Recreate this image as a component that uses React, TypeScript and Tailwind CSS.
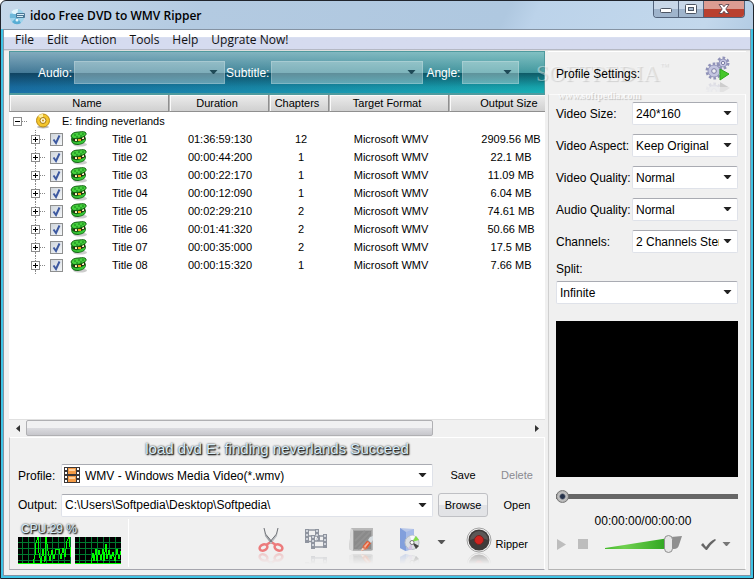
import type React from "react"
import clsx from "clsx"

interface Title {
  name: string
  duration: string
  chapters: number
  size: string
}

const menus = ["File", "Edit", "Action", "Tools", "Help", "Upgrate Now!"]

const titles: Title[] = [
  { name: "Title 01", duration: "01:36:59:130", chapters: 12, size: "2909.56 MB" },
  { name: "Title 02", duration: "00:00:44:200", chapters: 1, size: "22.1 MB" },
  { name: "Title 03", duration: "00:00:22:170", chapters: 1, size: "11.09 MB" },
  { name: "Title 04", duration: "00:00:12:090", chapters: 1, size: "6.04 MB" },
  { name: "Title 05", duration: "00:02:29:210", chapters: 2, size: "74.61 MB" },
  { name: "Title 06", duration: "00:01:41:320", chapters: 2, size: "50.66 MB" },
  { name: "Title 07", duration: "00:00:35:000", chapters: 2, size: "17.5 MB" },
  { name: "Title 08", duration: "00:00:15:320", chapters: 1, size: "7.66 MB" },
]

const columns = ["Name", "Duration", "Chapters", "Target Format", "Output Size"]

const settings = [
  { id: "video-size", label: "Video Size:", value: "240*160" },
  { id: "video-aspect", label: "Video Aspect:", value: "Keep Original" },
  { id: "video-quality", label: "Video Quality:", value: "Normal" },
  { id: "audio-quality", label: "Audio Quality:", value: "Normal" },
  { id: "channels", label: "Channels:", value: "2 Channels Stereo" },
]

function Caret({ className }: { className?: string }) {
  return (
    <svg className={className} width="9" height="5" viewBox="0 0 9 5" fill="currentColor" aria-hidden="true">
      <path d="M0.500 0h8L5 4H4z" />
    </svg>
  )
}

interface ComboProps {
  id: string
  value: string
  className?: string
  icon?: React.ReactNode
}

function Combo({ id, value, className, icon }: ComboProps) {
  return (
    <div className={clsx("relative min-w-0", className)}>
      <select
        id={id}
        className={clsx(
          "block h-[23px] w-full appearance-none overflow-hidden rounded-[2px] border border-[#dfe2e9] border-t-[#a9abb2] bg-white pr-[18px] text-xs",
          icon ? "pl-[23px]" : "pl-[3px]",
        )}
      >
        <option>{value}</option>
      </select>
      {icon && <span className="pointer-events-none absolute left-[3px] top-[3px]">{icon}</span>}
      <Caret className="pointer-events-none absolute right-[6px] top-[9px] text-[#222]" />
    </div>
  )
}

function GlassCombo({ id, label, className }: { id: string; label: string; className: string }) {
  return (
    <>
      <label htmlFor={id} className="text-xs text-white">
        {label}
      </label>
      <div className={clsx("relative ml-0.5", className)}>
        <select id={id} className="block h-[23px] w-full appearance-none border border-white/20 bg-[#d8eaec]/40" />
        <Caret className="pointer-events-none absolute right-[7px] top-[9px] text-[#1f4a57]" />
      </div>
    </>
  )
}

// Toolbar glyph with a fading mirror image below it
function ReflectedIcon({ name, children }: { name: string; children: React.ReactNode }) {
  return (
    <svg width="26" height="38" viewBox="0 0 26 38" aria-hidden="true">
      <defs>
        <linearGradient id={`${name}-fade`} x1="0" y1="26" x2="0" y2="37" gradientUnits="userSpaceOnUse">
          <stop offset="0" stopColor="#fff" stopOpacity="0.35" />
          <stop offset="1" stopColor="#fff" stopOpacity="0" />
        </linearGradient>
        <mask id={`${name}-mask`} maskUnits="userSpaceOnUse" x="0" y="25" width="26" height="13">
          <rect y="25" width="26" height="13" fill={`url(#${name}-fade)`} />
        </mask>
      </defs>
      <g>{children}</g>
      <g mask={`url(#${name}-mask)`}>
        <g transform="translate(0 51) scale(1 -1)">{children}</g>
      </g>
    </svg>
  )
}

function Scissors() {
  return (
    <ReflectedIcon name="cut">
      <path d="M6 1l1 6 8 9-2 1-6-8z" fill="#a3a6ab" />
      <path d="M20 1l-1 6-8 9 2 1 6-8z" fill="#b9bcc0" />
      <path d="M6 1l1.500 6L15 16M20 1l-1.500 6L11 16" stroke="#6b6e73" fill="none" />
      <g fill="none" stroke="#ec7b7c" strokeWidth="2.500">
        <ellipse cx="5.500" cy="20.500" rx="4" ry="3" transform="rotate(-25 5.500 20.500)" />
        <ellipse cx="20.500" cy="20.500" rx="4" ry="3" transform="rotate(25 20.500 20.500)" />
        <path d="M8 18l4-2.500M18 18l-4-2.500" />
      </g>
    </ReflectedIcon>
  )
}

function Merge() {
  return (
    <ReflectedIcon name="merge">
      <g fill="none" stroke="#8f949f" strokeWidth="4">
        <path d="M4 2v14M14 2v6" />
        <path d="M3 3h12M3 9h6M4 14.500h5" strokeWidth="1.500" />
        <path d="M10 8v14M22 7v14" />
        <path d="M10 9h13M10 14h12M10 20h13" strokeWidth="1.500" />
        <path d="M15.500 8v6" strokeWidth="3" />
      </g>
      <g fill="none" stroke="#cfd3da" strokeWidth="2" strokeDasharray="2 2">
        <path d="M4 3v12M14 3v10M10 9v12M22 8v12" />
      </g>
    </ReflectedIcon>
  )
}

function EditClip() {
  return (
    <ReflectedIcon name="edit">
      <path d="M3 1h22v22l-2 1H5l-4-2z" fill="#b9b9b9" />
      <path d="M3 1L1 22l4 2V3z" fill="#d9d9d9" />
      <rect x="5.500" y="3.500" width="18" height="19" fill="#8a8a8a" stroke="#a6a6a6" />
      <path d="M7 20L22 5M7 14L17 4M10 22L23 9" stroke="#929292" strokeWidth="2" />
      <path d="M13 24l2-5 4-5 4 2-4 6z" fill="#df7350" />
      <path d="M15 19l4-5 4 2-4 5z" fill="#e15a33" />
      <path d="M16 19l4-4 1 1-4 5z" fill="#f4b29a" />
      <path d="M20 13l2-3 3-1v4l-2 3z" fill="#d6dce0" />
      <path d="M13 24l1-3 3 1z" fill="#f2ddd0" />
    </ReflectedIcon>
  )
}

function DiscFolder() {
  return (
    <ReflectedIcon name="disc">
      <path d="M4 1l14 1v20l-9 2-5-3z" fill="#b9c8e8" />
      <path d="M4 1l6 4v19l-6-3z" fill="#829fdc" />
      <path d="M10 5l8-3v19l-8 3z" fill="#a6bbe8" />
      <circle cx="16" cy="15.500" r="7" fill="#dcdfe3" stroke="#b8bec7" />
      <path d="M16 15L14 9a7 7 0 0 1 5 0z" fill="#f9fafb" />
      <path d="M16 15l4-6 3 4z" fill="#83df48" />
      <path d="M16 15l-4 7 4 1z" fill="#d3c3e2" />
      <path d="M16 15l7 4-3 3z" fill="#444" />
      <circle cx="16" cy="15.500" r="2" fill="#fff" stroke="#777" />
    </ReflectedIcon>
  )
}

function Record() {
  return (
    <ReflectedIcon name="record">
      <circle cx="13" cy="13" r="12" fill="#f2f2f2" stroke="#a4a4a4" />
      <circle cx="13" cy="13" r="10.500" fill="#3f3b3a" />
      <path d="M4 13a9 9 0 0 1 18 0q-9-4-18 0z" fill="#5c5857" />
      <circle cx="13" cy="13" r="4.500" fill="#d02420" stroke="#7a2421" />
    </ReflectedIcon>
  )
}

function Gear({ x, y, r }: { x: number; y: number; r: number }) {
  return (
    <g transform={`translate(${x} ${y})`}>
      <circle r={r} fill="none" stroke="#9092b8" strokeWidth="3" strokeDasharray="2.500 2" />
      <circle r={r - 1} fill="#c3c5e0" stroke="#9496bc" />
      <circle r={r / 3} fill="#f0f0f4" stroke="#7e7fa6" />
    </g>
  )
}

function Gears() {
  return (
    <svg width="26" height="36" viewBox="0 0 26 36" aria-hidden="true">
      <g opacity="0.18" transform="translate(0 50) scale(1 -1)">
        <Gear x={9} y={15} r={7} />
        <path d="M15 12l10 6-10 6z" fill="#333" />
      </g>
      <rect y="31" width="26" height="5" fill="#f0f0f0" opacity="0.6" />
      <Gear x={18} y={7} r={5} />
      <Gear x={9} y={15} r={7} />
      <path d="M15 13l9 5-9 6z" fill="#45c72a" stroke="#2fa61d" />
    </svg>
  )
}

function AppIcon() {
  return (
    <svg width="17" height="17" viewBox="0 0 17 17" aria-hidden="true">
      <circle cx="8" cy="8.500" r="7.500" fill="#9ed3ea" />
      <path d="M8 8.500L2 4a7.500 7.500 0 0 1 7-3z" fill="#e4f5fb" />
      <path d="M8 9l-5 5a7.500 7.500 0 0 0 9 1z" fill="#57add4" />
      <path d="M1 6h6v4H1z" fill="#6fb9da" />
      <rect x="7" y="5" width="9" height="5" rx="1" fill="#4a7896" />
      <path d="M8 6.500h7M8 8.500h6" stroke="#d9edf6" />
      <circle cx="8" cy="12" r="1.500" fill="#e8f7fc" />
    </svg>
  )
}

function DiscIcon() {
  return (
    <svg width="16" height="16" viewBox="0 0 16 16" aria-hidden="true">
      <ellipse cx="8" cy="14" rx="6" ry="1.500" fill="#bbb" />
      <circle cx="8" cy="7.500" r="6.500" fill="#f4c62c" stroke="#b98a14" />
      <path d="M8 7L3 3a6.500 6.500 0 0 1 5-2z" fill="#fff0a0" />
      <circle cx="8" cy="7.500" r="3" fill="#fff7d6" stroke="#a87810" />
      <circle cx="8" cy="7.500" r="1" fill="#c58c14" />
    </svg>
  )
}

function TitleIcon() {
  return (
    <svg width="18" height="16" viewBox="0 0 18 16" aria-hidden="true">
      <ellipse cx="10" cy="13.500" rx="7" ry="2" fill="#ccc" />
      <path d="M1 8q0 6 7 6 8-1 8-6l-1-3H2z" fill="#116b13" />
      <path d="M2 10q6 3 13-2v2q-2 3-7 3-5 0-6-3z" fill="#38c536" />
      <path d="M3 8l12-3v3q-5 3-11 2z" fill="#2b2a10" />
      <path d="M5 8h2v2H5zM12 6h2v2h-2z" fill="#fff6c5" />
      <path d="M8 8h3v2H8z" fill="#f0ae1e" />
      <path d="M1 5q1-4 8-4 6-1 7 1 1 3-6 5-8 2-9-2z" fill="#45cf3c" stroke="#10600f" />
      <path d="M4 4h2M8 3h2M12 3h2M6 6h2M10 5h2" stroke="#128016" />
    </svg>
  )
}

function FilmIcon() {
  return (
    <svg className="block" width="16" height="16" viewBox="0 0 16 16" aria-hidden="true">
      <rect width="16" height="16" fill="#3c3636" />
      <path d="M2 1v15M14 1v15" stroke="#fff" strokeWidth="2" strokeDasharray="2 2" />
      <rect x="4" y="1" width="8" height="6" fill="#f49a45" />
      <rect x="4" y="9" width="8" height="6" fill="#f49a45" />
      <path d="M5 3h6M5 11h6" stroke="#ffd09a" strokeWidth="2" />
    </svg>
  )
}

function CpuGraph({ width, points }: { width: number; points: string }) {
  const lines: number[] = []
  for (let x = 4; x < width; x += 6) lines.push(x)
  return (
    <svg width={width} height="27" viewBox={`0 0 ${width} 27`} shapeRendering="crispEdges" aria-hidden="true">
      <rect width={width} height="27" fill="#000" />
      {lines.map((x) => (
        <path key={x} d={`M${x}.5 0v27`} stroke="#007a2e" />
      ))}
      {[5, 11, 17, 23].map((y) => (
        <path key={y} d={`M0 ${y}.5h${width}`} stroke="#007a2e" />
      ))}
      <polyline points={points} fill="none" stroke="#00ff00" />
      <path d={`M0 26.500h${width}`} stroke="#00ff00" />
    </svg>
  )
}

function ExpandBox({ label, open }: { label: string; open?: boolean }) {
  return (
    <button type="button" aria-label={label} className="block size-[9px] shrink-0 bg-white">
      <svg className="block" width="9" height="9" viewBox="0 0 9 9" shapeRendering="crispEdges">
        <rect x="0.500" y="0.500" width="8" height="8" fill="#fff" stroke="#8c8c8c" />
        <path d={open ? "M2 4.500h5" : "M2 4.500h5M4.500 2v5"} stroke="#000" />
      </svg>
    </button>
  )
}

function TitleBar() {
  return (
    <header className="flex h-7 items-start">
      <div className="flex h-full flex-1 items-center gap-1 pt-0.5 pl-2">
        <AppIcon />
        <h1 className="font-['Open_Sans','Noto_Sans',sans-serif] text-xs font-semibold text-black">
          idoo Free DVD to WMV Ripper
        </h1>
      </div>
      <div className="mr-2 flex h-[17px] overflow-hidden rounded-b border border-t-0 border-[#52627a]">
        <button
          type="button"
          aria-label="Minimize"
          className="flex w-[25px] items-center justify-center border-r border-[#52627a] bg-linear-to-b from-[#c8d7e8] from-50% to-[#9fb4cc] to-50%"
        >
          <svg width="12" height="10" viewBox="0 0 12 10">
            <rect x="0.500" y="4.500" width="11" height="4" rx="1" fill="#fff" stroke="#4d5563" />
          </svg>
        </button>
        <button
          type="button"
          aria-label="Maximize"
          className="flex w-[25px] items-center justify-center border-r border-[#52627a] bg-linear-to-b from-[#c8d7e8] from-50% to-[#9fb4cc] to-50%"
        >
          <svg width="12" height="10" viewBox="0 0 12 10">
            <rect x="0.500" y="0.500" width="11" height="9" rx="1" fill="#fff" stroke="#4d5563" />
            <rect x="3.500" y="3.500" width="5" height="3" fill="#aabdd2" stroke="#4d5563" />
          </svg>
        </button>
        <button
          type="button"
          aria-label="Close"
          className="flex w-[40px] items-center justify-center bg-linear-to-b from-[#dc9c92] from-50% to-[#b9402f] to-50%"
        >
          <svg width="12" height="10" viewBox="0 0 13 11">
            <path
              d="M1 0.500h3.500l2 2.500 2-2.500H12L8.500 5.500l3.500 5H8.500l-2-2.500-2 2.500H1l3.500-5z"
              fill="#fff"
              stroke="#5c4650"
            />
          </svg>
        </button>
      </div>
    </header>
  )
}

function TitleList() {
  return (
    <div className="min-h-0 flex-1 overflow-hidden bg-white">
      <table className="w-[564px] table-fixed border-separate border-spacing-0 text-center text-[11px] leading-4 text-black">
        <colgroup>
          <col className="w-[160px]" />
          <col className="w-[100px]" />
          <col className="w-[60px]" />
          <col className="w-[120px]" />
          <col className="w-[124px]" />
        </colgroup>
        <thead>
          <tr>
            {columns.map((column) => (
              <th
                key={column}
                className="h-[17px] border-r border-b border-l border-[#8f8f8f] border-l-[#b5b5b5] bg-linear-to-b from-[#ececec] to-[#d0d0d0] p-0 pr-1 font-normal inset-shadow-[1px_1px_0_#fafafa]"
              >
                {column}
              </th>
            ))}
          </tr>
        </thead>
        <tbody>
          <tr>
            <td colSpan={5} className="h-[18px] p-0">
              <div className="flex items-center pl-1">
                <ExpandBox label="Collapse E: finding neverlands" open />
                <span className="w-[5px] border-t border-dotted border-[#888]" />
                <span className="ml-2">
                  <DiscIcon />
                </span>
                <span className="ml-[11px]">E: finding neverlands</span>
              </div>
            </td>
          </tr>
          {titles.map((title) => (
            <tr key={title.name}>
              <td className="h-[18px] p-0">
                <div className="flex h-[18px] items-center pl-[22px]">
                  <span className="flex h-full w-[9px] flex-col items-center">
                    <span className="flex-1 border-l border-dotted border-[#888]" />
                    <ExpandBox label={`Expand ${title.name}`} />
                    <span className="flex-1 border-l border-dotted border-[#888]" />
                  </span>
                  <span className="w-[5px] border-t border-dotted border-[#888]" />
                  <span className="relative ml-[5px] size-[13px]">
                    <input
                      type="checkbox"
                      defaultChecked
                      aria-label={title.name}
                      className="peer block size-[13px] appearance-none border border-[#8e8f8f] bg-linear-to-br from-[#cfd5dc] to-[#f4f6f8]"
                    />
                    <svg
                      className="pointer-events-none absolute top-0 left-0 hidden peer-checked:block"
                      width="13"
                      height="13"
                      viewBox="0 0 13 13"
                    >
                      <path d="M3.500 6.500l2.500 3.500 3.500-7.500" fill="none" stroke="#3d59a0" strokeWidth="2" />
                    </svg>
                  </span>
                  <span className="ml-[7px]">
                    <TitleIcon />
                  </span>
                  <span className="ml-6">{title.name}</span>
                </div>
              </td>
              <td className="p-0 pl-0.5">{title.duration}</td>
              <td className="p-0 pl-1">{title.chapters}</td>
              <td className="p-0 pl-1">Microsoft WMV</td>
              <td className="p-0">{title.size}</td>
            </tr>
          ))}
        </tbody>
      </table>
    </div>
  )
}

function ScrollBar() {
  return (
    <div className="flex h-[18px] items-center border-t border-[#e0e0e0] bg-[#f1f1f1]">
      <button type="button" aria-label="Scroll left" className="flex w-[17px] justify-center text-[#333]">
        <svg width="4" height="7" viewBox="0 0 4 7" fill="currentColor">
          <path d="M4 0v7L0 3.500z" />
        </svg>
      </button>
      <div className="flex h-full flex-1">
        <div className="h-4 w-[81%] rounded-[2px] border border-[#b0b0b3] bg-linear-to-b from-[#f1f1f2] from-50% via-[#dcdce0] via-50% to-[#c7c7cc]" />
      </div>
      <button type="button" aria-label="Scroll right" className="flex w-[17px] justify-center text-[#333]">
        <svg width="4" height="7" viewBox="0 0 4 7" fill="currentColor">
          <path d="M0 0v7l4-3.500z" />
        </svg>
      </button>
    </div>
  )
}

function OutputPanel() {
  return (
    <section className="border-t border-r border-b border-l border-t-white border-r-white border-b-[#a5a5ad] border-l-[#c4c4c4]">
      <p className="flex h-[22px] items-center justify-center text-[15px] text-[#d9eef8] [text-shadow:1px_1px_1px_#222,0_0_2px_#333,1px_1px_2px_#444]">
        load dvd E: finding neverlands Succeed
      </p>

      <div className="mt-1 grid grid-cols-[43px_1fr_50px_48px] items-center gap-x-[5px] gap-y-[6px] pr-[3px] pl-2 text-xs">
        <label htmlFor="profile">Profile:</label>
        <Combo id="profile" value="WMV - Windows Media Video(*.wmv)" icon={<FilmIcon />} className="-ml-[5px]" />
        <button type="button" className="text-[11px]">
          Save
        </button>
        <button type="button" disabled className="text-[11px] text-[#8a8a90]">
          Delete
        </button>
        <label htmlFor="output">Output:</label>
        <Combo id="output" value="C:\Users\Softpedia\Desktop\Softpedia\" className="-ml-[5px]" />
        <button
          type="button"
          className="h-6 rounded-[3px] border border-[#bfc0c4] bg-linear-to-b from-[#f3f3f3] from-50% to-[#e2e3e6] to-50% text-[11px]"
        >
          Browse
        </button>
        <button type="button" className="text-[11px]">
          Open
        </button>
      </div>

      <div className="mt-0.5 flex h-[50px] items-start pb-0.5">
        <div className="flex h-full w-[119px] flex-col border-r border-white pl-2">
          <span className="pt-0.5 pl-[3px] text-xs leading-4 text-[#d9eef8] [text-shadow:1px_1px_1px_#222,0_0_2px_#333,1px_1px_2px_#444]">
            CPU:29 %
          </span>
          <div className="flex gap-1">
            <CpuGraph
              width={53}
              points="15,26 17,18 18,6 20,0 21,16 23,26 25,12 27,25 28,0 30,14 32,24 34,13 36,22 38,12 41,12 43,22 45,11 47,20 49,4 51,0 53,20"
            />
            <CpuGraph
              width={46}
              points="16,26 18,16 19,24 21,12 22,24 24,13 26,23 28,12 29,24 31,7 32,22 34,13 36,22 38,15 40,24 42,12 44,22 46,14"
            />
          </div>
        </div>
        <div className="flex flex-1 items-start justify-end pt-2 pr-4">
          <button type="button" aria-label="Trim">
            <Scissors />
          </button>
          <button type="button" aria-label="Merge" className="ml-[19px]">
            <Merge />
          </button>
          <button type="button" aria-label="Edit" className="ml-[19px]">
            <EditClip />
          </button>
          <button type="button" aria-label="Output disc" className="ml-[22px]">
            <DiscFolder />
          </button>
          <button type="button" aria-label="More outputs" className="mt-[13px] ml-[15px]">
            <Caret className="text-[#555]" />
          </button>
          <button type="button" className="ml-5 flex items-start gap-1 text-[11px]">
            <Record />
            <span className="mt-[9px]">Ripper</span>
          </button>
        </div>
      </div>
    </section>
  )
}

function ProfileSettings() {
  return (
    <aside className="flex w-[198px] shrink-0 flex-col text-xs text-black">
      <div className="relative flex h-[43px] items-center justify-between border-t border-white pt-0.5 pr-[15px] pl-2">
        <div className="pointer-events-none absolute top-2 -left-3 font-['Liberation_Serif',serif] text-white/40">
          <div className="flex items-start text-[23px] leading-7 [text-shadow:1px_1px_1px_#0002]">
            SOFTPEDIA<span className="text-[9px] leading-3">™</span>
          </div>
          <div className="pl-[22px] text-[10px] leading-4 font-bold text-white/80 [text-shadow:1px_1px_1px_#0003]">
            www.softpedia.com
          </div>
        </div>
        <h2 className="relative">Profile Settings:</h2>
        <span className="relative">
          <Gears />
        </span>
      </div>

      <div className="flex flex-1 flex-col border border-t-[#fafafa] border-r-white border-b-[#b4b4b4] border-l-[#d0d0d0] pt-[7px] pr-[7px] pl-[7px]">
        <div className="grid grid-cols-[76px_1fr] items-center gap-y-[9px]">
          {settings.map((setting) => (
            <div key={setting.id} className="contents">
              <label htmlFor={setting.id} className="whitespace-nowrap">
                {setting.label}
              </label>
              <Combo id={setting.id} value={setting.value} />
            </div>
          ))}
        </div>

        <label htmlFor="split" className="mt-2 leading-4">
          Split:
        </label>
        <Combo id="split" value="Infinite" className="mt-1" />

        <div className="mt-[17px] flex-1 bg-black" />

        <input
          type="range"
          aria-label="Position"
          defaultValue={0}
          className="mt-3 h-[14px] w-full appearance-none bg-transparent [&::-webkit-slider-runnable-track]:h-[5px] [&::-webkit-slider-runnable-track]:bg-[#666] [&::-webkit-slider-thumb]:-mt-1 [&::-webkit-slider-thumb]:size-[13px] [&::-webkit-slider-thumb]:appearance-none [&::-webkit-slider-thumb]:rounded-full [&::-webkit-slider-thumb]:border [&::-webkit-slider-thumb]:border-[#777] [&::-webkit-slider-thumb]:bg-[radial-gradient(#26324a_25%,#c4c4c4_45%,#999)]"
        />

        <p className="mt-[10px] pr-2 text-center leading-4">00:00:00/00:00:00</p>

        <div className="mt-[3px] mb-[13px] flex h-6 items-center pl-px">
          <button type="button" aria-label="Play">
            <svg width="9" height="11" viewBox="0 0 9 11">
              <path d="M0 0v11l9-5.500z" fill="#bdbdbd" />
            </svg>
          </button>
          <button type="button" aria-label="Stop" className="ml-3 size-[10px] bg-[#bdbdbd]" />
          <div className="relative ml-[17px] h-5 w-[78px]">
            <svg className="block" width="78" height="20" viewBox="0 0 78 20" aria-hidden="true">
              <defs>
                <linearGradient id="volume-fill">
                  <stop offset="0" stopColor="#45b92c" />
                  <stop offset="0.300" stopColor="#6fd04f" />
                  <stop offset="1" stopColor="#2ba31d" />
                </linearGradient>
              </defs>
              <path d="M0 14L64 4v11H0z" fill="url(#volume-fill)" />
              <path d="M66 3l11-1-3 9q-1 4-5 4h-3z" fill="#8f8f8f" />
            </svg>
            <input
              type="range"
              aria-label="Volume"
              defaultValue={96}
              className="absolute inset-0 h-5 w-[70px] appearance-none bg-transparent [&::-webkit-slider-thumb]:h-[18px] [&::-webkit-slider-thumb]:w-[9px] [&::-webkit-slider-thumb]:appearance-none [&::-webkit-slider-thumb]:rounded-full [&::-webkit-slider-thumb]:border [&::-webkit-slider-thumb]:border-[#8e8e8e] [&::-webkit-slider-thumb]:bg-[#e6e6e6]"
            />
          </div>
          <button type="button" aria-label="Snapshot" className="ml-[18px] flex items-center gap-1.5 text-[#777]">
            <svg width="15" height="13" viewBox="0 0 15 13">
              <path d="M0 7l2-2 3 4q4-6 9-8l1 1q-5 4-9 10H5z" fill="#666" />
            </svg>
            <Caret />
          </button>
        </div>
      </div>
    </aside>
  )
}

export default function App() {
  return (
    <div className="flex h-screen min-h-[500px] flex-col overflow-hidden rounded-t-md border border-[#20242c] bg-[linear-gradient(115deg,#c6d8ea_0%,#b3cae1_20%,#afc8e0_50%,#bcd3ea_53%,#c3d8ec_70%,#a9c4df_78%,#c2d7eb_90%)] font-['Liberation_Sans',Arial,sans-serif]">
      <TitleBar />
      <div className="flex min-h-0 flex-1 flex-col border-x-2 border-b-2 border-[#3fc4e6]">
        <div className="flex min-h-0 flex-1 flex-col border border-[#8593a3] bg-[#f0f0f0]">
          <nav className="flex h-[19px] items-center gap-[13px] bg-linear-to-b from-white from-35% to-[#d5dbef] to-40% pl-[11px] font-['Open_Sans','Noto_Sans',sans-serif] text-xs text-[#111]">
            {menus.map((menu) => (
              <button key={menu} type="button">
                {menu}
              </button>
            ))}
          </nav>
          <div className="border-t border-b border-t-[#b4b8c4] border-b-[#dedede]" />

          <div className="flex min-h-0 flex-1 gap-[3px] pr-1 pb-[5px] pl-[5px]">
            <main className="flex min-w-0 flex-1 flex-col">
              <div className="flex h-11 shrink-0 items-center border border-b-2 border-[#4f9a9e] bg-[linear-gradient(to_bottom,rgba(185,200,200,0.65),rgba(110,130,135,0.5)_50%,rgba(10,40,55,0.65)_50%,rgba(10,60,80,0.15)_85%,rgba(255,255,255,0)),linear-gradient(to_right,#1a70a8,#18b2b8)] pl-7">
                <GlassCombo id="audio" label="Audio:" className="mr-[1px] w-[151px]" />
                <GlassCombo id="subtitle" label="Subtitle:" className="mr-[3px] w-[152px]" />
                <GlassCombo id="angle" label="Angle:" className="w-[57px]" />
              </div>
              <TitleList />
              <ScrollBar />
              <OutputPanel />
            </main>
            <ProfileSettings />
          </div>
        </div>
      </div>
    </div>
  )
}
